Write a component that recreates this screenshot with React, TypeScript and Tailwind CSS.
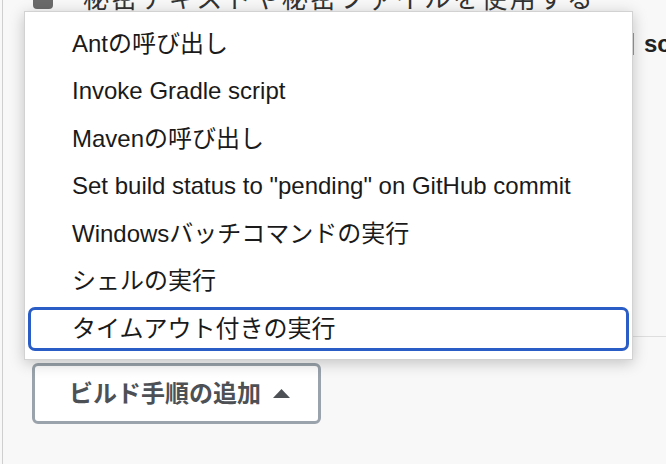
import { useState } from 'react';

const items = [
  'Antの呼び出し',
  'Invoke Gradle script',
  'Mavenの呼び出し',
  'Set build status to "pending" on GitHub commit',
  'Windowsバッチコマンドの実行',
  'シェルの実行',
  'タイムアウト付きの実行',
];

const font = { fontFamily: '"Liberation Sans", "Noto Sans CJK JP", sans-serif' };

export default function App() {
  const [active, setActive] = useState(6);

  return (
    <div className="relative flex h-[464px] w-[666px] overflow-hidden bg-[#f8f8f8] text-[#333]" style={font}>
      {/* page behind the menu */}
      <div className="ml-[2px] h-[464px] w-px shrink-0 bg-[#cfcfcf]" />
      <div className="flex-1">
        <div className="-mt-[15px] flex h-[28px] items-center gap-[30px] pl-[30px]">
          <div className="h-[20px] w-[20px] rounded-[4px] bg-[#6b6b6b]" />
          <span className="whitespace-nowrap text-[26px] leading-none tracking-[2.5px]">秘密テキストや秘密ファイルを使用する</span>
        </div>

        <div className="mt-[19px] flex h-[24px] justify-end">
          <div className="flex items-center gap-[10px]">
            <div className="h-[22px] w-px bg-[#999]" />
            <span className="w-[22px] overflow-hidden whitespace-nowrap text-[24px] leading-none font-bold text-[#222]">scm</span>
          </div>
        </div>

        <div className="ml-[60px] mt-[280px] h-px bg-[#dedede]" />

        <div className="mt-[26px] pl-[29px]">
          <button className="flex h-[61px] w-[289px] items-center gap-[12px] rounded-[6px] border-[3px] border-[#9aa3ab] bg-white pl-[34px] text-[24px] leading-none font-bold text-[#4d5156]">
            ビルド手順の追加
            <svg width="17" height="10" viewBox="0 0 17 10" className="mt-[1px]">
              <path d="M8.5 0 L17 9 L0 9 Z" fill="#4d5156" />
            </svg>
          </button>
        </div>
      </div>

      {/* dropdown menu */}
      <div className="absolute left-[24px] top-[11px] h-[349px] w-[609px] border border-[#d2d2d2] bg-white px-[3px] pt-[8px] shadow-[0_3px_14px_rgba(0,0,0,0.22)]">
        {items.map((label, i) => (
          <div key={label} className="flex h-[47.5px] items-center" onMouseEnter={() => setActive(i)}>
            <div
              className={`flex h-[44px] w-full items-center whitespace-nowrap rounded-[7px] border-[3px] pl-[41px] text-[24px] leading-none text-[#1a1a1a] ${
                i === active ? 'border-[#2a5ec6]' : 'border-transparent'
              }`}
            >
              {label}
            </div>
          </div>
        ))}
      </div>
    </div>
  );
}
